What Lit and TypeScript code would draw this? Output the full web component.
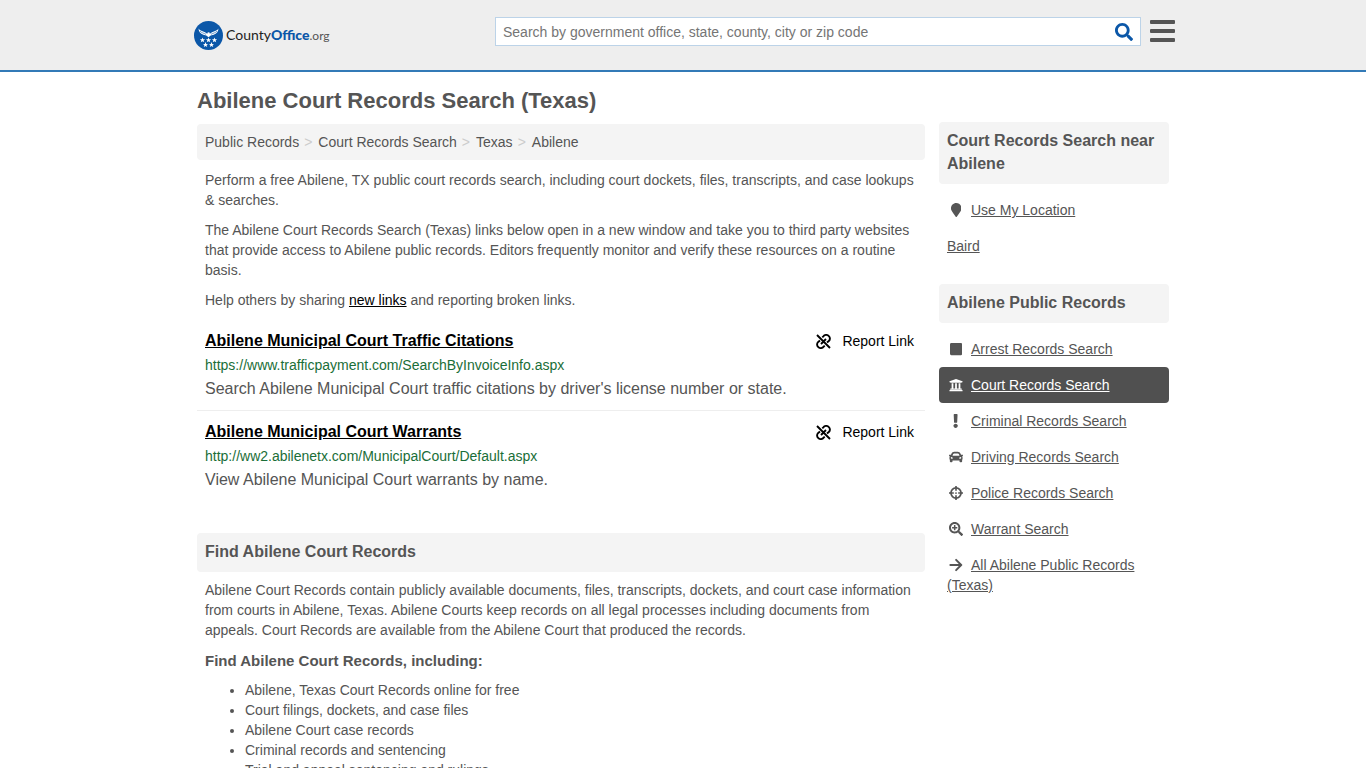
import { LitElement, html, css, svg } from "lit";
import { customElement } from "lit/decorators.js";

const fa = (box: string, d: string) =>
  html`<svg class="glyph" viewBox=${box} aria-hidden="true">${svg`<path d=${d} fill="currentColor"/>`}</svg>`;

const icons = {
  marker: fa("0 0 384 512", "M172.268 501.67C26.97 291.031 0 269.413 0 192 0 85.961 85.961 0 192 0s192 85.961 192 192c0 77.413-26.97 99.031-172.268 309.67-9.535 13.774-29.93 13.773-39.464 0z"),
  square: fa("0 0 448 512", "M400 32H48C21.5 32 0 53.5 0 80v352c0 26.5 21.5 48 48 48h352c26.5 0 48-21.5 48-48V80c0-26.5-21.5-48-48-48z"),
  court: fa("0 0 512 512", "M496 128v16a8 8 0 0 1-8 8h-24v12c0 6.627-5.373 12-12 12H60c-6.627 0-12-5.373-12-12v-12H24a8 8 0 0 1-8-8v-16a8 8 0 0 1 4.941-7.392l232-88a7.996 7.996 0 0 1 6.118 0l232 88A8 8 0 0 1 496 128zm-24 304H40c-13.255 0-24 10.745-24 24v16a8 8 0 0 0 8 8h464a8 8 0 0 0 8-8v-16c0-13.255-10.745-24-24-24zM96 192v192H60c-6.627 0-12 5.373-12 12v20h416v-20c0-6.627-5.373-12-12-12h-36V192h-64v192h-64V192h-64v192h-64V192H96z"),
  exclamation: fa("0 0 192 512", "M176 432c0 44.112-35.888 80-80 80s-80-35.888-80-80 35.888-80 80-80 80 35.888 80 80zM25.26 25.199l13.6 272C39.499 309.972 50.041 320 62.83 320h66.34c12.789 0 23.331-10.028 23.97-22.801l13.6-272C167.425 11.49 156.496 0 142.77 0H49.23C35.504 0 24.575 11.49 25.26 25.199z"),
  car: fa("0 0 512 512", "M499.99 176h-59.87l-16.64-41.6C406.38 91.63 365.57 64 319.5 64h-127c-46.06 0-86.88 27.63-103.99 70.4L71.87 176H12.01C4.2 176-1.53 183.34.37 190.91l6 24C7.7 220.25 12.5 224 18.01 224h20.07C24.65 235.73 16 252.78 16 272v48c0 16.12 6.16 30.67 16 41.93V416c0 17.67 14.33 32 32 32h32c17.67 0 32-14.33 32-32v-32h256v32c0 17.67 14.33 32 32 32h32c17.67 0 32-14.33 32-32v-54.07c9.84-11.25 16-25.8 16-41.93v-48c0-19.22-8.65-36.27-22.07-48H494c5.51 0 10.31-3.75 11.64-9.09l6-24c1.89-7.57-3.84-14.91-11.65-14.91zm-352.06-17.83c7.29-18.22 24.94-30.17 44.57-30.17h127c19.63 0 37.28 11.95 44.57 30.17L384 208H128l19.93-49.83zM96 319.8c-19.2 0-32-12.76-32-31.9S76.8 256 96 256s48 28.71 48 47.85-28.8 15.95-48 15.95zm320 0c-19.2 0-48 3.19-48-15.95S396.8 256 416 256s32 12.76 32 31.9-12.8 31.9-32 31.9z"),
  crosshairs: html`<svg class="glyph" viewBox="0 0 512 512" aria-hidden="true"><g fill="none" stroke="currentColor"><circle cx="256" cy="256" r="184" stroke-width="64"/><path d="M256 0v176M256 336v176M0 256h176M336 256h176" stroke-width="60"/></g><circle cx="256" cy="256" r="32" fill="currentColor"/></svg>`,
  zoom: fa("0 0 512 512", "M304 192v32c0 6.600-5.400 12-12 12h-56v56c0 6.600-5.400 12-12 12h-32c-6.600 0-12-5.400-12-12v-56h-56c-6.600 0-12-5.400-12-12v-32c0-6.600 5.400-12 12-12h56v-56c0-6.600 5.400-12 12-12h32c6.600 0 12 5.400 12 12v56h56c6.600 0 12 5.400 12 12zm201 284.700L476.700 505c-9.400 9.400-24.600 9.400-33.900 0L343 405.300c-4.500-4.500-7-10.600-7-17V372c-35.300 27.600-79.700 44-128 44C93.100 416 0 322.900 0 208S93.100 0 208 0s208 93.100 208 208c0 48.300-16.400 92.700-44 128h16.300c6.400 0 12.500 2.500 17 7l99.700 99.700c9.300 9.400 9.300 24.600 0 34zM344 208c0-75.200-60.800-136-136-136S72 132.800 72 208s60.800 136 136 136 136-60.800 136-136z"),
  arrow: html`<svg class="glyph" viewBox="0 0 512 512" aria-hidden="true"><path d="M50 256h400M260 70l186 186-186 186" fill="none" stroke="currentColor" stroke-width="72" stroke-linecap="round" stroke-linejoin="round"/></svg>`,
};

const searchIcon = fa("0 0 512 512", "M505 442.700L405.300 343c-4.500-4.500-10.600-7-17-7H372c27.600-35.300 44-79.700 44-128C416 93.100 322.900 0 208 0S0 93.100 0 208s93.100 208 208 208c48.300 0 92.700-16.400 128-44v16.300c0 6.400 2.500 12.500 7 17l99.700 99.700c9.400 9.400 24.600 9.400 33.900 0l28.300-28.300c9.400-9.400 9.400-24.600.1-34zM208 336c-70.700 0-128-57.200-128-128 0-70.700 57.200-128 128-128 70.700 0 128 57.200 128 128 0 70.700-57.200 128-128 128z");

const unlinkIcon = html`<svg class="unlink" viewBox="0 0 15 15" aria-hidden="true"><g fill="none" stroke="currentColor" stroke-width="1.900"><path d="M1 1l13 13M10 5l-5 5"/><path d="M6.300 3.300l1-1a3.700 3.700 0 0 1 5.600-.2 3.500 3.500 0 0 1-.1 5l-1.800 1.500M8.700 11.700l-1 1a3.700 3.700 0 0 1-5.600.2 3.500 3.500 0 0 1 .1-5l1.800-1.500"/></g></svg>`;

const star = (x: number, y: number) =>
  svg`<path transform=${`translate(${x} ${y})`} d="M0-2.600L.7-.8 2.600-.8 1.100.4 1.700 2.300 0 1.200-1.700 2.300-1.100.4-2.600-.8-.7-.8z" fill="#fff"/>`;

const crumbs = ["Public Records", "Court Records Search", "Texas", "Abilene"];

const results = [
  {
    title: "Abilene Municipal Court Traffic Citations",
    url: "https://www.trafficpayment.com/SearchByInvoiceInfo.aspx",
    text: "Search Abilene Municipal Court traffic citations by driver's license number or state.",
  },
  {
    title: "Abilene Municipal Court Warrants",
    url: "http://ww2.abilenetx.com/MunicipalCourt/Default.aspx",
    text: "View Abilene Municipal Court warrants by name.",
  },
];

const records = [
  { icon: icons.square, label: "Arrest Records Search" },
  { icon: icons.court, label: "Court Records Search", active: true },
  { icon: icons.exclamation, label: "Criminal Records Search" },
  { icon: icons.car, label: "Driving Records Search" },
  { icon: icons.crosshairs, label: "Police Records Search" },
  { icon: icons.zoom, label: "Warrant Search" },
  { icon: icons.arrow, label: "All Abilene Public Records (Texas)" },
];

const included = [
  "Abilene, Texas Court Records online for free",
  "Court filings, dockets, and case files",
  "Abilene Court case records",
  "Criminal records and sentencing",
  "Trial and appeal sentencing and rulings",
];

@customElement("app-root")
export class AppRoot extends LitElement {
  static styles = css`
    :host {
      display: block;
      height: 100vh;
      overflow: hidden;
      background: #fff;
      color: #555;
      font: 14px/20px "Liberation Sans", Arial, sans-serif;
    }
    * { box-sizing: border-box; }
    a { color: inherit; }
    h1, h2, h3, p, ul, ol { margin: 0; padding: 0; }
    header { background: #eee; border-bottom: 2px solid #337ab7; }
    .bar {
      display: flex;
      align-items: flex-start;
      max-width: 984px;
      height: 70px;
      margin: 0 auto;
      padding: 17px 0 0 3px;
    }
    .logo {
      display: flex;
      align-items: center;
      gap: 3px;
      flex: 1;
      height: 36px;
      color: #222;
      font: 14px/20px Lato, sans-serif;
      text-decoration: none;
    }
    .seal { width: 29px; height: 29px; flex: none; }
    .logo b { color: #0b57a8; font-weight: 900; }
    .logo small { font-size: 12px; color: #555; }
    .search {
      display: flex;
      width: 646px;
      max-width: 66%;
      height: 29px;
      border: 1px solid #bcd3e8;
      background: #fff;
    }
    .search input {
      flex: 1;
      min-width: 0;
      border: 0;
      padding: 0 7px;
      background: none;
      color: #555;
      font: inherit;
      outline: none;
    }
    .search input::placeholder { color: #757575; opacity: 1; }
    button { border: 0; padding: 0; background: none; cursor: pointer; }
    .search button { display: flex; align-items: center; padding: 0 7px; color: #0b57a8; }
    .search .glyph { width: 18px; height: 18px; }
    .menu {
      display: flex;
      flex-direction: column;
      gap: 5px;
      width: 25px;
      margin: 3px 0 0 9px;
    }
    .menu span { height: 4px; width: 100%; border-radius: 1px; background: #555; }
    .page {
      display: grid;
      grid-template-columns: minmax(0, 1fr) 230px;
      column-gap: 14px;
      max-width: 972px;
      margin: 0 auto;
    }
    h1 { font-size: 22px; line-height: 24px; padding: 17px 0 11px; }
    .crumbs {
      display: flex;
      list-style: none;
      padding: 8px;
      border-radius: 4px;
      background: #f4f4f4;
    }
    .crumbs a { text-decoration: none; }
    .crumbs li + li::before { content: ">"; padding: 0 6px 0 5px; color: #ccc; }
    .copy { display: grid; gap: 10px; padding: 10px 8px; }
    .dark { color: #000; }
    .result {
      display: grid;
      grid-template-columns: minmax(0, 1fr) auto;
      padding: 11px 8px;
    }
    .result + .result { border-top: 1px solid #eee; }
    .title { font-size: 16px; font-weight: bold; color: #000; }
    .report {
      display: flex;
      align-items: center;
      gap: 11px;
      padding-right: 3px;
      color: #000;
      text-decoration: none;
    }
    .unlink { width: 15px; height: 15px; }
    .url { grid-column: 1 / -1; margin-top: 4px; color: #1a6e38; }
    .summary { grid-column: 1 / -1; margin-top: 4px; font-size: 16px; }
    h2 {
      padding: 7px 8px 9px;
      border-radius: 4px;
      background: #f4f4f4;
      font-size: 16px;
      line-height: 23px;
    }
    .about { padding-top: 32px; }
    h3 { margin-bottom: -1px; font-size: 15px; line-height: 21px; }
    .about .copy { padding-top: 8px; }
    .included { padding-left: 40px; }
    aside { padding-top: 50px; }
    .side { list-style: none; padding: 8px 0 20px; }
    .side li { padding: 8px; border-radius: 4px; }
    .side li.active { background: #505050; color: #fff; }
    .fw { display: inline-flex; justify-content: center; width: 18px; margin-right: 6px; vertical-align: -2px; }
    .fw .glyph { height: 14px; max-width: 14px; }
  `;

  render() {
    return html`
      <header>
        <div class="bar">
          <a class="logo" href="#">
            <svg class="seal" viewBox="0 0 29 29" aria-hidden="true">
              <circle cx="14.500" cy="14.500" r="14.500" fill="#0b57a8" />
              <path fill="#fff" d="M4.500 7.500C6 9.800 8.500 10 11 11.200l2.200 1.500.7-1.500 1.600.2.400 1.300 2.100-1.500c2.500-1.200 5-1.400 6.500-3.700-.2 3.600-2 5.200-4.800 6.300l-3 .6-2.200 1.800-2.200-1.800-3-.6C6.500 12.700 4.700 11.100 4.500 7.500z" />
              <path fill="none" stroke="#0b57a8" stroke-width=".6" d="M6 10.200c1.500 1.600 3.500 1.800 6 3.100M23 10.200c-1.500 1.600-3.500 1.800-6 3.100" />
              ${star(8.5, 19)} ${star(14.5, 19)} ${star(20.5, 19)} ${star(11.5, 23.7)} ${star(17.5, 23.7)}
            </svg>
            <span>County<b>Office</b><small>.org</small></span>
          </a>
          <form class="search" role="search" @submit=${(e: Event) => e.preventDefault()}>
            <input type="text" aria-label="Search" placeholder="Search by government office, state, county, city or zip code" />
            <button type="submit" aria-label="Search">${searchIcon}</button>
          </form>
          <button class="menu" type="button" aria-label="Menu"><span></span><span></span><span></span></button>
        </div>
      </header>
      <div class="page">
        <main>
          <h1>Abilene Court Records Search (Texas)</h1>
          <ol class="crumbs">${crumbs.map((c) => html`<li><a href="#">${c}</a></li>`)}</ol>
          <div class="copy">
            <p>Perform a free Abilene, TX public court records search, including court dockets, files, transcripts, and case lookups &amp; searches.</p>
            <p>The Abilene Court Records Search (Texas) links below open in a new window and take you to third party websites that provide access to Abilene public records. Editors frequently monitor and verify these resources on a routine basis.</p>
            <p>Help others by sharing <a class="dark" href="#">new links</a> and reporting broken links.</p>
          </div>
          ${results.map((r) => html`
            <article class="result">
              <div><a class="title" href="#">${r.title}</a></div>
              <a class="report" href="#">${unlinkIcon}Report Link</a>
              <div class="url">${r.url}</div>
              <p class="summary">${r.text}</p>
            </article>`)}
          <section class="about">
            <h2>Find Abilene Court Records</h2>
            <div class="copy">
              <p>Abilene Court Records contain publicly available documents, files, transcripts, dockets, and court case information from courts in Abilene, Texas. Abilene Courts keep records on all legal processes including documents from appeals. Court Records are available from the Abilene Court that produced the records.</p>
              <h3>Find Abilene Court Records, including:</h3>
              <ul class="included">${included.map((t) => html`<li>${t}</li>`)}</ul>
            </div>
          </section>
        </main>
        <aside>
          <h2>Court Records Search near Abilene</h2>
          <ul class="side">
            <li><span class="fw">${icons.marker}</span><a href="#">Use My Location</a></li>
            <li><a href="#">Baird</a></li>
          </ul>
          <h2>Abilene Public Records</h2>
          <ul class="side">
            ${records.map((r) => html`<li class=${r.active ? "active" : ""}><span class="fw">${r.icon}</span><a href="#">${r.label}</a></li>`)}
          </ul>
        </aside>
      </div>
    `;
  }
}
